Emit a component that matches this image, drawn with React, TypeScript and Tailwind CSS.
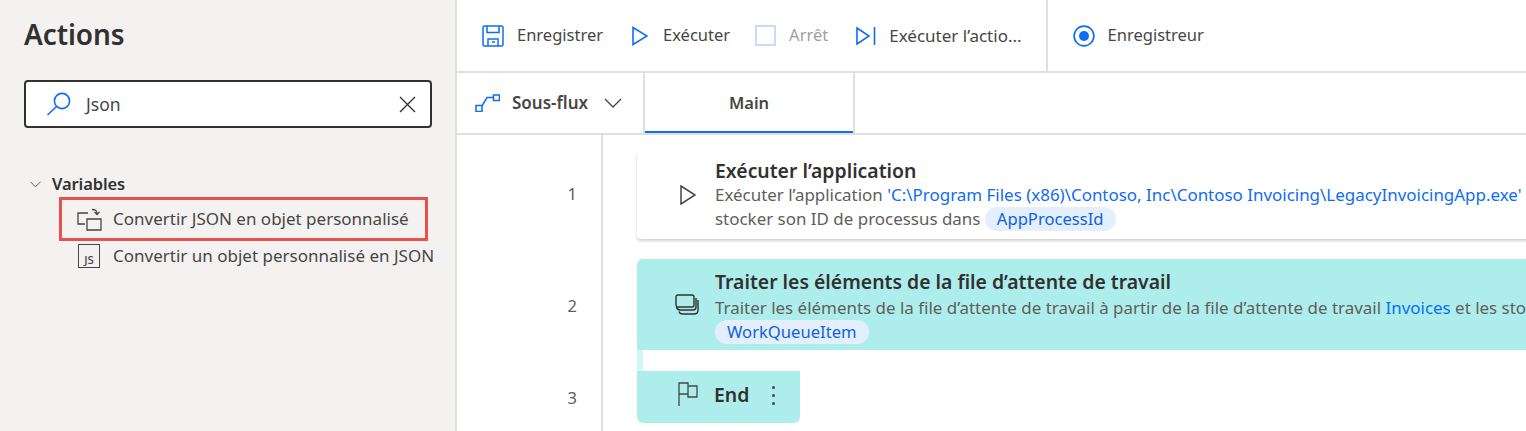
import React from 'react';
import { ChevronDown } from 'lucide-react';

const font = { fontFamily: '"Noto Sans", sans-serif' };

const ToolButton = ({ icon, label, muted, className, textClass = 'text-[16.5px]' }: { icon: React.ReactNode; label: string; muted?: boolean; className: string; textClass?: string }) => (
  <div className={`flex items-center ${className}`}>
    {icon}
    <span className={`${textClass} whitespace-nowrap ${muted ? 'text-[#a19f9d]' : 'text-[#484644]'}`}>{label}</span>
  </div>
);

const Link = ({ children }: { children: React.ReactNode }) => <span className="text-[#0f6cf5]">{children}</span>;

const Chip = ({ children }: { children: React.ReactNode }) => (
  <span className="inline-block h-[24px] rounded-full bg-[#e3effd] px-[12px] text-[16.6px] leading-[23px] text-[#0f62dc]">{children}</span>
);

export default function App() {
  return (
    <div className="flex h-[431px] w-[1526px] overflow-hidden bg-white" style={font}>
      {/* left panel */}
      <aside className="h-full w-[457px] shrink-0 border-r-2 border-[#e1dfdd] bg-[#f3f2f1] pl-[24px]">
        <h1 className="pt-[13px] text-[28px] leading-[42px] font-semibold tracking-[-0.1px] text-[#323130]">Actions</h1>
        <div className="mt-[25px] flex h-[48px] w-[408px] items-center rounded-[4px] border-2 border-[#323130] bg-white pl-[20px] pr-[13px]">
          <svg width="26" height="26" viewBox="0 0 26 26" fill="none" stroke="#0f6cf5" strokeWidth="1.6">
            <circle cx="16" cy="10" r="7.6" />
            <path d="M10.5 15.5 1.5 24" />
          </svg>
          <span className="ml-[14px] flex-1 text-[17.5px] text-[#484644]">Json</span>
          <svg width="17" height="17" viewBox="0 0 17 17" fill="none" stroke="#323130" strokeWidth="1.4" className="mr-[1px]">
            <path d="M1 1l15 15M16 1 1 16" />
          </svg>
        </div>
        <div className="mt-[44px] flex h-[24px] items-center pl-[2px]">
          <ChevronDown size={19} strokeWidth={1.2} className="text-[#605e5c]" />
          <span className="ml-[7px] text-[16.5px] font-semibold tracking-[-0.1px] text-[#323130]">Variables</span>
        </div>
        <div className="mt-[1px] ml-[35px] flex h-[44px] w-[369px] items-center border-[3px] border-[#e8504b] pl-[14px]">
          <svg width="26" height="26" viewBox="0 0 26 26" fill="none" stroke="#484644" strokeWidth="1.3" className="shrink-0">
            <path d="M12 7H2v11h7" />
            <path d="M11 13h14v11H11z" />
            <path d="M16 3.500c3 0 5 .5 5 4.500M18.500 6l2.500 2.500L23.500 6" />
          </svg>
          <span className="ml-[11px] whitespace-nowrap text-[17px] text-[#484644]">Convertir JSON en objet personnalisé</span>
        </div>
        <div className="ml-[54px] flex h-[30px] items-center">
          <div className="flex h-[24px] w-[22px] shrink-0 items-end justify-center border border-[#484644] pb-[1px] text-[11.5px] leading-[13px] font-medium text-[#484644]">
            JS
          </div>
          <span className="ml-[13px] whitespace-nowrap text-[17px] text-[#484644]">Convertir un objet personnalisé en JSON</span>
        </div>
      </aside>

      <main className="min-w-0 flex-1">
        {/* toolbar */}
        <div className="flex h-[73px] items-center border-b-2 border-[#e1dfdd]">
          <ToolButton
            className="ml-[25px]"
            label="Enregistrer"
            icon={
              <svg width="22" height="22" viewBox="0 0 22 22" fill="none" stroke="#0f6cf5" strokeWidth="1.500" className="mr-[13px]">
                <path d="M1 2.500A1.500 1.500 0 0 1 2.500 1h17A1.500 1.500 0 0 1 21 2.500v17a1.500 1.500 0 0 1-1.500 1.500H2.500A1.500 1.500 0 0 1 1 19.500z" />
                <path d="M5 1v6.500h12V1M6 21v-7h10v7M10 17h3" />
              </svg>
            }
          />
          <ToolButton
            className="ml-[29px]"
            label="Exécuter"
            icon={
              <svg width="16" height="20" viewBox="0 0 16 20" fill="none" stroke="#0f6cf5" strokeWidth="1.600" className="mr-[15px]">
                <path d="M1 1.500 15 10 1 18.500z" />
              </svg>
            }
          />
          <ToolButton
            className="ml-[25px]"
            label="Arrêt"
            muted
            icon={<div className="mr-[13px] size-[21px] border-2 border-[#c7dcfb]" />}
          />
          <ToolButton
            className="ml-[28px]"
            label="Exécuter l’actio..."
            textClass="text-[17px]"
            icon={
              <svg width="20" height="20" viewBox="0 0 20 20" fill="none" stroke="#0f6cf5" strokeWidth="1.600" className="mr-[13px]">
                <path d="M1 2 13 10 1 18zM18.500 1v18" />
              </svg>
            }
          />
          <div className="ml-[24px] h-full w-[2px] bg-[#e1dfdd]" />
          <ToolButton
            className="ml-[25px]"
            label="Enregistreur"
            icon={
              <svg width="22" height="22" viewBox="0 0 22 22" className="mr-[13px]">
                <circle cx="11" cy="11" r="9.900" fill="none" stroke="#0f6cf5" strokeWidth="1.600" />
                <circle cx="11" cy="11" r="5" fill="#0f6cf5" />
              </svg>
            }
          />
        </div>

        {/* tabs */}
        <div className="flex h-[62px] border-b-2 border-[#e1dfdd]">
          <div className="flex w-[188px] items-center border-r-2 border-[#e1dfdd] pl-[18px]">
            <svg width="25" height="18" viewBox="0 0 25 18" fill="none" stroke="#0f6cf5" strokeWidth="1.500">
              <path d="M1 11.500h6v6H1zM18.500 1h6v5.500h-6zM7 12l5-8.500h6" />
            </svg>
            <span className="ml-[12px] text-[17px] font-semibold text-[#484644]">Sous-flux</span>
            <svg width="18" height="10" viewBox="0 0 18 10" fill="none" stroke="#484644" strokeWidth="1.300" className="ml-[16px]">
              <path d="M1 1l8 8 8-8" />
            </svg>
          </div>
          <div className="relative flex w-[210px] items-center justify-center border-r-2 border-[#e1dfdd] text-[16.500px] font-semibold text-[#484644]">
            Main
            <div className="absolute inset-x-0 bottom-0 h-[2px] bg-[#0f6cf5]" />
          </div>
        </div>

        {/* flow */}
        <div className="flex h-[296px]">
          <div className="w-[146px] shrink-0 border-r-2 border-[#e1dfdd] text-center text-[16.500px] text-[#605e5c]">
            <div className="flex h-[118px] items-center justify-end pr-[24px]">1</div>
            <div className="flex h-[106px] items-center justify-end pr-[24px]">2</div>
            <div className="flex h-[78px] items-center justify-end pr-[24px]">3</div>
          </div>
          <div className="min-w-0 flex-1 overflow-hidden pl-[34px] pt-[15px]">
            <div className="flex h-[89px] w-[1000px] items-center rounded-[4px] bg-white pl-[43px] shadow-[0_2px_3px_rgba(0,0,0,0.18)]">
              <svg width="16" height="20" viewBox="0 0 16 20" fill="none" stroke="#484644" strokeWidth="1.500" className="shrink-0">
                <path d="M1 1 15 10 1 19z" />
              </svg>
              <div className="ml-[19px] text-[16.95px] leading-[24px] whitespace-nowrap text-[#605e5c]">
                <div className="text-[19.400px] leading-[25px] font-semibold text-[#323130]">Exécuter l’application</div>
                <div>
                  Exécuter l’application <Link>'C:\Program Files (x86)\Contoso, Inc\Contoso Invoicing\LegacyInvoicingApp.exe'</Link>
                </div>
                <div>
                  stocker son ID de processus dans <Chip>AppProcessId</Chip>
                </div>
              </div>
            </div>

            <div className="mt-[20px] flex h-[91px] w-[1000px] items-center rounded-t-[6px] bg-[#adeeec] pl-[38px]">
              <svg width="24" height="22" viewBox="0 0 24 22" fill="none" stroke="#323130" strokeWidth="1.400" className="shrink-0">
                <path d="M3 1h14a2 2 0 0 1 2 2v8a2 2 0 0 1-2 2H3a2 2 0 0 1-2-2V3a2 2 0 0 1 2-2z" />
                <path d="M1.500 13c.500 2 1.500 3 3.500 3h13c2 0 3-1 3-3V4M4 17.500c.500 1.500 1.500 2.500 3.500 2.500H19c2.500 0 4-1.500 4-4V6" />
              </svg>
              <div className="ml-[16px] pt-[3px] text-[16.95px] leading-[24px] whitespace-nowrap text-[#605e5c]">
                <div className="mb-[2px] text-[19.400px] leading-[25px] font-semibold text-[#323130]">Traiter les éléments de la file d’attente de travail</div>
                <div>
                  Traiter les éléments de la file d’attente de travail à partir de la file d’attente de travail <Link>Invoices</Link> et les stocker dans
                </div>
                <div className="h-[24px]">
                  <Chip>WorkQueueItem</Chip>
                </div>
              </div>
            </div>
            <div className="h-[21px] w-[6px] bg-[#d3f6f9]" />
            <div className="flex h-[52px] w-[163px] items-center rounded-b-[6px] bg-[#adeeec] pl-[41px]">
              <svg width="20" height="24" viewBox="0 0 20 24" fill="none" stroke="#484644" strokeWidth="1.300" className="mb-[6px] shrink-0">
                <path d="M1 24V1h9v3h9v11h-9v-3H1M10 1v11" />
              </svg>
              <span className="mb-[4px] ml-[16px] text-[19.400px] font-semibold text-[#323130]">End</span>
              <div className="ml-[23px] mb-[4px] flex flex-col gap-[5px]">
                <i className="size-[3px] rounded-full bg-[#484644]" />
                <i className="size-[3px] rounded-full bg-[#484644]" />
                <i className="size-[3px] rounded-full bg-[#484644]" />
              </div>
            </div>
          </div>
        </div>
      </main>
    </div>
  );
}
